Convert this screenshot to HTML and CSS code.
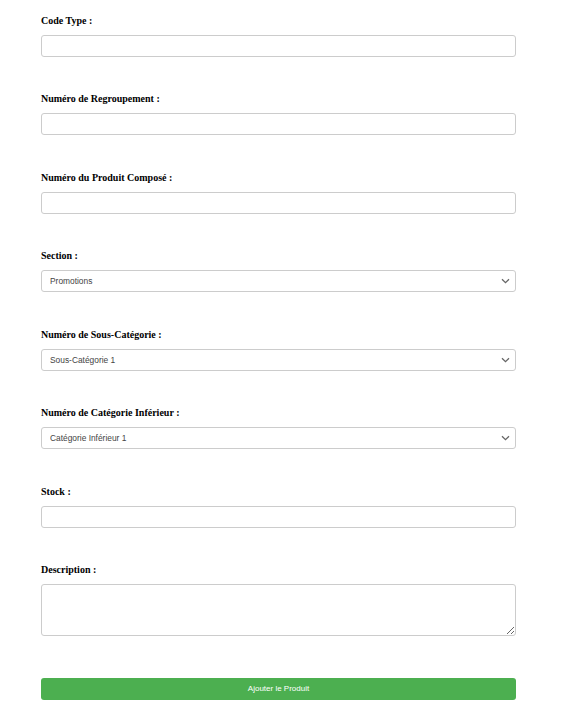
FILE: index.html
```html
<!DOCTYPE html>
<html lang="fr">
<head>
<meta charset="utf-8">
<title>Ajouter un produit</title>
<link rel="stylesheet" href="styles.css">
</head>
<body>
<form class="form">
  <div class="group">
    <label class="label" for="codeType">Code Type :</label>
    <input class="field" id="codeType" type="text">
  </div>
  <div class="group">
    <label class="label" for="regroupement">Numéro de Regroupement :</label>
    <input class="field" id="regroupement" type="text">
  </div>
  <div class="group">
    <label class="label" for="compose">Numéro du Produit Composé :</label>
    <input class="field" id="compose" type="text">
  </div>
  <div class="group">
    <label class="label" for="section">Section :</label>
    <div class="select-wrap">
      <select class="field select" id="section">
        <option>Promotions</option>
      </select>
      <svg class="chevron" width="9" height="6" viewBox="0 0 9 6"><path d="M1 1.2 L4.5 4.6 L8 1.2" fill="none" stroke="#666" stroke-width="1.3"/></svg>
    </div>
  </div>
  <div class="group">
    <label class="label" for="sousCat">Numéro de Sous-Catégorie :</label>
    <div class="select-wrap">
      <select class="field select" id="sousCat">
        <option>Sous-Catégorie 1</option>
      </select>
      <svg class="chevron" width="9" height="6" viewBox="0 0 9 6"><path d="M1 1.2 L4.5 4.6 L8 1.2" fill="none" stroke="#666" stroke-width="1.3"/></svg>
    </div>
  </div>
  <div class="group">
    <label class="label" for="catInf">Numéro de Catégorie Inférieur :</label>
    <div class="select-wrap">
      <select class="field select" id="catInf">
        <option>Catégorie Inférieur 1</option>
      </select>
      <svg class="chevron" width="9" height="6" viewBox="0 0 9 6"><path d="M1 1.2 L4.5 4.6 L8 1.2" fill="none" stroke="#666" stroke-width="1.3"/></svg>
    </div>
  </div>
  <div class="group">
    <label class="label" for="stock">Stock :</label>
    <input class="field" id="stock" type="text">
  </div>
  <div class="group group-last">
    <label class="label" for="desc">Description :</label>
    <textarea class="field area" id="desc"></textarea>
  </div>
  <button class="submit" type="button">Ajouter le Produit</button>
</form>
</body>
</html>
```

FILE: styles.css
```css
html, body {
  margin: 0;
  padding: 0;
  background: #ffffff;
}
.form {
  width: 475px;
  padding: 14px 0 0 41px;
  display: flex;
  flex-direction: column;
}
.group {
  display: flex;
  flex-direction: column;
  margin-bottom: 35.43px;
}
.group-last {
  margin-bottom: 42px;
}
.label {
  font-family: "Liberation Serif", "Times New Roman", serif;
  font-weight: bold;
  font-size: 10px;
  line-height: 12px;
  color: #000;
  padding-top: 1px;
  margin-bottom: 8px;
}
.field {
  box-sizing: border-box;
  width: 475px;
  height: 22px;
  margin: 0;
  border: 1px solid #cccccc;
  border-radius: 3px;
  background: #fff;
  font-family: "Liberation Sans", Arial, sans-serif;
  font-size: 8.4px;
  color: #444;
  padding: 0 7px;
}
.select-wrap {
  position: relative;
  width: 475px;
  height: 22px;
}
.select {
  -webkit-appearance: none;
  appearance: none;
  display: block;
  padding-left: 8px;
}
.chevron {
  position: absolute;
  right: 6px;
  top: 8px;
  pointer-events: none;
}
.area {
  display: block;
  height: 52px;
  resize: vertical;
}
.submit {
  box-sizing: border-box;
  width: 475px;
  height: 22px;
  border: none;
  border-radius: 3px;
  background: #4caf50;
  color: #fff;
  font-family: "Liberation Sans", Arial, sans-serif;
  font-size: 8px;
  cursor: pointer;
}
```
